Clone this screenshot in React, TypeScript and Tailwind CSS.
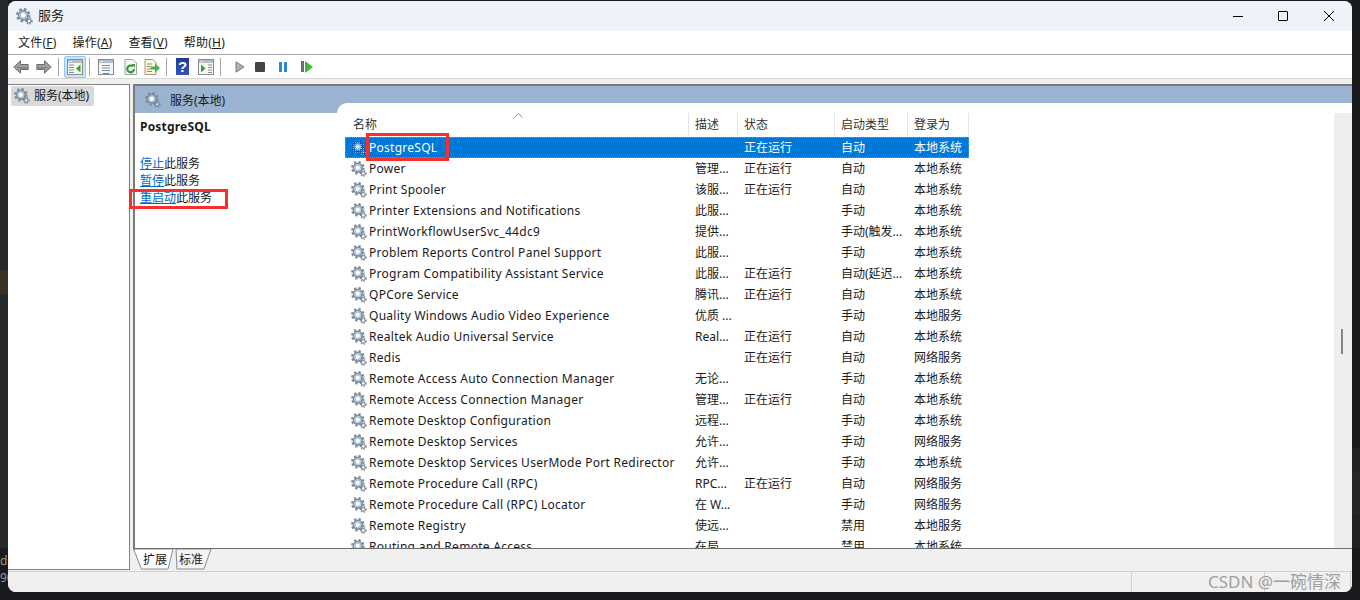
import * as React from "react";

type Row = {name: string; desc: string; status: string; start: string; logon: string};

const rows: Row[] = [
  {name: "PostgreSQL", desc: "", status: "正在运行", start: "自动", logon: "本地系统"},
  {name: "Power", desc: "管理...", status: "正在运行", start: "自动", logon: "本地系统"},
  {name: "Print Spooler", desc: "该服...", status: "正在运行", start: "自动", logon: "本地系统"},
  {name: "Printer Extensions and Notifications", desc: "此服...", status: "", start: "手动", logon: "本地系统"},
  {name: "PrintWorkflowUserSvc_44dc9", desc: "提供...", status: "", start: "手动(触发...", logon: "本地系统"},
  {name: "Problem Reports Control Panel Support", desc: "此服...", status: "", start: "手动", logon: "本地系统"},
  {name: "Program Compatibility Assistant Service", desc: "此服...", status: "正在运行", start: "自动(延迟...", logon: "本地系统"},
  {name: "QPCore Service", desc: "腾讯...", status: "正在运行", start: "自动", logon: "本地系统"},
  {name: "Quality Windows Audio Video Experience", desc: "优质 ...", status: "", start: "手动", logon: "本地服务"},
  {name: "Realtek Audio Universal Service", desc: "Real...", status: "正在运行", start: "自动", logon: "本地系统"},
  {name: "Redis", desc: "", status: "正在运行", start: "自动", logon: "网络服务"},
  {name: "Remote Access Auto Connection Manager", desc: "无论...", status: "", start: "手动", logon: "本地系统"},
  {name: "Remote Access Connection Manager", desc: "管理...", status: "正在运行", start: "自动", logon: "本地系统"},
  {name: "Remote Desktop Configuration", desc: "远程...", status: "", start: "手动", logon: "本地系统"},
  {name: "Remote Desktop Services", desc: "允许...", status: "", start: "手动", logon: "网络服务"},
  {name: "Remote Desktop Services UserMode Port Redirector", desc: "允许...", status: "", start: "手动", logon: "本地系统"},
  {name: "Remote Procedure Call (RPC)", desc: "RPC...", status: "正在运行", start: "自动", logon: "网络服务"},
  {name: "Remote Procedure Call (RPC) Locator", desc: "在 W...", status: "", start: "手动", logon: "网络服务"},
  {name: "Remote Registry", desc: "使远...", status: "", start: "禁用", logon: "本地服务"},
  {name: "Routing and Remote Access", desc: "在局...", status: "", start: "禁用", logon: "本地系统"},
];

const Gear = ({selected = false, className = "h-4 w-4"}: {selected?: boolean; className?: string}) => {
  const dark = selected ? "url(#gear-dither)" : "#7d8996";
  const ring = selected ? "#7fb4e6" : "#a6c6e4";
  return (
    <svg viewBox="0 0 16 16" className={`shrink-0 ${className}`}>
      <defs>
        <pattern id="gear-dither" width="2" height="2" patternUnits="userSpaceOnUse">
          <rect width="2" height="2" fill="#0f5aa6" />
          <rect width="1" height="1" fill="#8fbdea" />
        </pattern>
      </defs>
      <circle cx="6.800" cy="6.800" r="5.700" fill="none" stroke={dark} strokeWidth="2.200" strokeDasharray="2.300 2.180" />
      <circle cx="6.800" cy="6.800" r="4.300" fill="none" stroke={dark} strokeWidth="1.600" />
      <circle cx="6.800" cy="6.800" r="2.800" fill={selected ? "#d5e6f7" : "#fff"} stroke={ring} strokeWidth="1.400" />
      <circle cx="12.300" cy="12.300" r="2.600" fill="none" stroke={dark} strokeWidth="1.600" strokeDasharray="1.300 1.200" />
      <circle cx="12.300" cy="12.300" r="1.800" fill="none" stroke={dark} strokeWidth="1" />
      <circle cx="12.300" cy="12.300" r="0.800" fill={selected ? "#d5e6f7" : "#fff"} />
    </svg>
  );
};

const Win = ({children}: {children?: React.ReactNode}) => (
  <svg viewBox="0 0 16 16" className="h-4 w-4 shrink-0">
    <rect x="0.5" y="0.5" width="15" height="15" fill="#f6f6f6" stroke="#8a8a8a" />
    <rect x="1" y="1" width="14" height="3" fill="#b4bec8" />
    <path d="M2 2.500h1M4 2.500h1" stroke="#fff" />
    {children}
  </svg>
);

const Toolbar = () => (
  <div className="flex h-[23px] items-center bg-white">
    <svg viewBox="0 0 16 14" className="ml-[5px] h-[14px] w-4">
      <path d="M.8 7 7.500.8v3.700H15.200v5H7.500v3.700z" fill="#a0a0a0" stroke="#6e6e6e" />
      <path d="M3 7h11.500v2H7.500z" fill="#858585" />
    </svg>
    <svg viewBox="0 0 16 14" className="ml-[7px] h-[14px] w-4">
      <path d="M15.200 7 8.500.8v3.700H.8v5h7.700v3.700z" fill="#a0a0a0" stroke="#6e6e6e" />
      <path d="M13 7H1.500v2h7z" fill="#858585" />
    </svg>
    <div className="ml-[6px] h-[18px] w-px bg-[#a8a8a8]" />
    <div className="ml-[5px] flex h-[22px] w-[22px] items-center justify-center rounded-[2px] border border-[#90c8f6] bg-[#cce4f7]">
      <Win>
        <path d="M2 6h5M2 8.500h5M2 11h5M2 13.500h5" stroke="#7f8fa0" />
        <path d="M13.500 5.500v8l-4.500-4z" fill="#2fa52f" />
      </Win>
    </div>
    <div className="ml-[3px] h-[18px] w-px bg-[#a8a8a8]" />
    <div className="ml-2">
      <Win>
        <path d="M4 6.500h8M4 9h8M4 11.500h8" stroke="#7f8fa0" />
        <rect x="5" y="14" width="6" height="1.500" fill="#2d9bd8" />
      </Win>
    </div>
    <svg viewBox="0 0 16 16" className="ml-[9px] h-4 w-4">
      <path d="M2 .500h8l3.500 3.500v11.500H2z" fill="#f6f6f6" stroke="#a0a0a0" />
      <path d="M11 10a3.400 3.400 0 1 1-1.200-2.700" fill="none" stroke="#2f9c35" strokeWidth="2.200" />
      <path d="M8.500 5h3.500v3.800z" fill="#2f9c35" />
    </svg>
    <svg viewBox="0 0 16 16" className="ml-[5px] h-4 w-4">
      <path d="M1 .500h8l3 3v12H1z" fill="#fbf6d8" stroke="#a09a7a" />
      <path d="M3 5h5M3 7.500h4M3 10h4M3 12.500h5" stroke="#8d8d7a" />
      <path d="M7 7.500h4V4.500l5 4.500-5 4.500v-3H7z" fill="#46b04a" />
    </svg>
    <div className="ml-[6px] h-[18px] w-px bg-[#a8a8a8]" />
    <div className="ml-[9px] flex h-[17px] w-[13px] items-center justify-center bg-gradient-to-b from-[#1e3a9a] to-[#3554b8] font-['Liberation_Sans',sans-serif] text-[15px] leading-none font-bold text-white">
      ?
    </div>
    <div className="ml-[9px]">
      <Win>
        <path d="M10 6h4M10 8.500h4M10 11h4M10 13.500h4" stroke="#7f8fa0" />
        <path d="M3 5.500v8l4.500-4z" fill="#2fa52f" />
      </Win>
    </div>
    <div className="ml-[6px] h-[18px] w-px bg-[#a8a8a8]" />
    <svg viewBox="0 0 10 12" className="ml-[14px] h-3 w-[10px]">
      <path d="M1 .8 9 6l-8 5.200z" fill="#b0b0b0" stroke="#7c7c7c" />
    </svg>
    <div className="ml-[10px] h-[10px] w-[10px] rounded-[1px] bg-[#444]" />
    <div className="ml-[14px] flex gap-[2px]">
      <div className="h-[10px] w-[3px] bg-[#2b88d8]" />
      <div className="h-[10px] w-[3px] bg-[#2b88d8]" />
    </div>
    <div className="ml-[14px] flex items-center gap-px">
      <div className="h-[11px] w-[3px] bg-[#6e6e6e]" />
      <svg viewBox="0 0 8 12" className="h-3 w-2">
        <path d="M0 0 8 6 0 12z" fill="#3cb83c" />
      </svg>
    </div>
  </div>
);

const Menu = ({label, k}: {label: string; k: string}) => (
  <span className="tracking-[0.2px]">
    {label}(<span className="underline">{k}</span>)
  </span>
);

const ServiceRow = ({row, index}: {row: Row; index: number}) => {
  const selected = index === 0;
  return (
    <div
      className={`flex h-[21px] w-[624px] shrink-0 items-center text-[12px] ${
        selected ? "bg-[#0078d7] text-white outline-1 -outline-offset-1 outline-[#d9843b] outline-dotted" : "text-[#1a1a1a]"
      }`}
    >
      <div className="flex w-[344px] items-center gap-[2px] pl-[6px] whitespace-nowrap">
        <Gear selected={selected} />
        <span className="tracking-[0.27px]">{row.name}</span>
      </div>
      <div className="w-[49px] pl-[6px] whitespace-nowrap">{row.desc}</div>
      <div className="w-[97px] pl-[6px] whitespace-nowrap">{row.status}</div>
      <div className="w-[73px] pl-[6px] whitespace-nowrap">{row.start}</div>
      <div className="w-[61px] pl-[6px] whitespace-nowrap">{row.logon}</div>
    </div>
  );
};

const HeaderCell = ({label, width, pad = "pl-[6px]"}: {label: string; width: string; pad?: string}) => (
  <div className={`flex h-[23px] items-center border-r border-[#e5e5e5] text-[12px] text-[#333] ${width} ${pad}`}>{label}</div>
);

export default function App() {
  return (
    <div className="relative h-[600px] w-[1360px] overflow-hidden bg-[#1a1b1e] pt-px pl-2 font-['Noto_Sans','Noto_Sans_CJK_SC',sans-serif]">
      {/* bits of the desktop behind the window */}
      <div className="absolute top-0 left-0 flex h-[548px] w-2 flex-col bg-[#26282b]">
        <div className="mt-[270px] h-[24px] bg-[#3a3123]" />
      </div>
      <div className="absolute top-[555px] left-0 text-[12px] leading-none text-[#a89468]">d</div>
      <div className="absolute top-[572px] left-0 text-[12px] leading-none text-[#8a9aa8]">90</div>
      <div className="absolute top-[448px] right-0 h-[24px] w-2 bg-[#222327]" />
      <div className="absolute top-[472px] right-0 h-[42px] w-2 bg-[#26272b]" />
      <div className="absolute top-[514px] right-0 h-[34px] w-2 bg-[#222327]" />

      <div className="relative flex h-[591px] w-[1344px] flex-col overflow-hidden rounded-lg bg-[#f0f0f0] text-[12px] text-[#1a1a1a]">
        {/* title bar */}
        <div className="flex h-[30px] shrink-0 items-center bg-[#eef3f9] pl-2">
          <Gear className="h-[17px] w-[17px]" />
          <span className="ml-[5px] text-[13px] text-[#222]">服务</span>
          <div className="ml-auto flex items-center">
            <div className="h-px w-[10px] bg-black" />
            <div className="ml-[35px] h-[10px] w-[10px] rounded-[1px] border border-black" />
            <svg viewBox="0 0 10 10" className="mr-[18px] ml-[36px] h-[10px] w-[10px]">
              <path d="M0 0 10 10M10 0 0 10" stroke="#000" strokeWidth="1" />
            </svg>
          </div>
        </div>

        {/* menu */}
        <div className="flex h-[24px] shrink-0 items-center gap-[16px] border-b border-[#a8a8a8] bg-white pl-[10px]">
          <Menu label="文件" k="F" />
          <Menu label="操作" k="A" />
          <Menu label="查看" k="V" />
          <Menu label="帮助" k="H" />
        </div>

        <div className="shrink-0">
          <Toolbar />
        </div>
        <div className="h-px shrink-0 bg-[#d8d8d8]" />

        {/* panes */}
        <div className="flex min-h-0 flex-1 pt-[5px]">
          <div className="h-[486px] w-[122px] shrink-0 border-t border-r border-b border-[#828282] bg-white p-[1px] pl-[3px]">
            <div className="flex h-[20px] w-[83px] items-center gap-[4px] rounded-[2px] bg-[#d9d9d9] pl-[3px]">
              <Gear />
              <span>服务(本地)</span>
            </div>
          </div>

          <div className="ml-[3px] flex w-[1219px] flex-col">
            <div className="flex h-[465px] shrink-0 flex-col border-t-2 border-b border-l-2 border-[#7a7a7a] border-b-[#6e6e6e] bg-white">
              <div className="flex h-[27px] shrink-0 items-center gap-[9px] bg-[#9ab3d0] pl-[10px] text-[#1a1a1a]">
                <Gear />
                <span className="pt-[2px]">服务(本地)</span>
              </div>
              <div className="-mt-[10px] flex min-h-0 flex-1">
                <div className="w-[202px] shrink-0 pt-[10px]">
                  <div className="pt-[5px] pl-[5px] font-bold tracking-[0.2px]">PostgreSQL</div>
                  <div className="mt-[19px] flex flex-col pl-[5px] leading-[17px]">
                    <span>
                      <span className="text-[#0066cc] underline">停止</span>此服务
                    </span>
                    <span>
                      <span className="text-[#0066cc] underline">暂停</span>此服务
                    </span>
                    <span>
                      <span className="text-[#0066cc] underline">重启动</span>此服务
                    </span>
                  </div>
                </div>
                <div className="relative flex min-w-0 flex-1 flex-col overflow-hidden rounded-tl-[10px] bg-white pl-[8px]">
                  <div className="mt-[10px] flex h-[24px] shrink-0">
                    <HeaderCell label="名称" width="w-[344px]" pad="pl-[8px]" />
                    <HeaderCell label="描述" width="w-[49px]" />
                    <HeaderCell label="状态" width="w-[97px]" />
                    <HeaderCell label="启动类型" width="w-[73px]" />
                    <HeaderCell label="登录为" width="w-[61px]" />
                  </div>
                  <svg viewBox="0 0 9 5" className="absolute top-[10px] left-[177px] h-[5px] w-[9px]">
                    <path d="M.5 4.500 4.500 .5l4 4" fill="none" stroke="#888" />
                  </svg>
                  <div className="flex min-h-0 flex-1 flex-col overflow-hidden">
                    {rows.map((row, i) => (
                      <ServiceRow key={row.name} row={row} index={i} />
                    ))}
                  </div>
                  <div className="absolute top-[10px] right-0 bottom-0 w-[18px] bg-[#eeeeee]">
                    <div className="absolute top-[216px] left-[7px] h-[25px] w-[2px] bg-[#858585]" />
                  </div>
                </div>
              </div>
            </div>

            {/* tabs */}
            <div className="relative flex h-[21px] shrink-0 items-center pl-[10px]">
              <svg viewBox="0 0 80 21" className="absolute top-0 left-0 h-[21px] w-[80px]">
                <path d="M43 0 44 20h27L78 0z" fill="#f4f4f4" stroke="#8a8a8a" />
                <path d="M.5 0 8.500 20H35L40 0z" fill="#fff" stroke="#8a8a8a" />
              </svg>
              <span className="relative">扩展</span>
              <span className="relative ml-[12px]">标准</span>
            </div>
          </div>
        </div>

        {/* status bar */}
        <div className="flex h-[21px] shrink-0 justify-end border-t border-[#d0d0d0] bg-[#f0f0f0] pr-px">
          <div className="w-[133px] border-l border-[#d0d0d0]" />
          <div className="w-[87px] border-x border-[#d0d0d0]" />
        </div>
      </div>

      {/* red marks drawn over the screenshot */}
      <div className="absolute top-[133px] left-[366px] h-[28px] w-[83px] border-[3px] border-[#f5302e]" />
      <div className="absolute top-[189px] left-[129px] h-[20px] w-[99px] border-[3px] border-[#f5302e]" />

      <div className="absolute top-[572px] left-[1208px] text-[17px] leading-[20px] text-[#a0a0a0]">CSDN @一碗情深</div>
    </div>
  );
}
